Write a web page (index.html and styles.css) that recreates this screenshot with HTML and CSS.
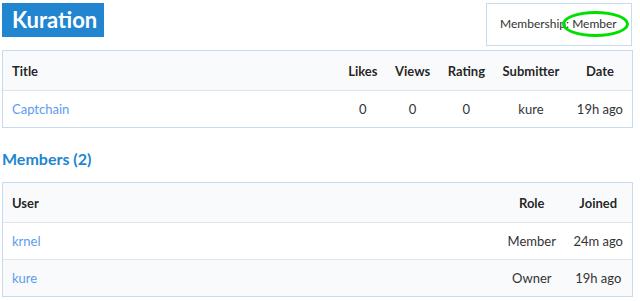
FILE: index.html
```html
<!DOCTYPE html>
<html lang="en">
<head>
    <meta charset="UTF-8">
    <title>Kuration</title>
    <link rel="stylesheet" href="styles.css">
</head>
<body>

<div class="page">

    <!-- Top bar -->
    <div class="top-bar">
        <h1 class="brand">Kuration</h1>
        <div class="membership">
            Membership: <span class="status">Member</span>
        </div>
    </div>

    <!-- Submissions -->
    <table class="list">
        <thead>
            <tr>
                <th class="left">Title</th>
                <th>Likes</th>
                <th>Views</th>
                <th>Rating</th>
                <th>Submitter</th>
                <th>Date</th>
            </tr>
        </thead>
        <tbody>
            <tr>
                <td class="left"><a href="#">Captchain</a></td>
                <td>0</td>
                <td>0</td>
                <td>0</td>
                <td>kure</td>
                <td>19h ago</td>
            </tr>
        </tbody>
    </table>

    <!-- Members -->
    <h2 class="section-title">Members (2)</h2>
    <table class="list">
        <thead>
            <tr>
                <th class="left">User</th>
                <th>Role</th>
                <th>Joined</th>
            </tr>
        </thead>
        <tbody>
            <tr>
                <td class="left"><a href="#">krnel</a></td>
                <td>Member</td>
                <td>24m ago</td>
            </tr>
            <tr class="alt">
                <td class="left"><a href="#">kure</a></td>
                <td>Owner</td>
                <td>19h ago</td>
            </tr>
        </tbody>
    </table>

</div>

</body>
</html>
```

FILE: styles.css
```css
body {
    font-family: Lato, 'Liberation Sans', sans-serif;
    margin: 0;
    padding: 0;
    background: white;
    color: rgba(0, 0, 0, 0.87);
    font-size: 13px;
}

.page {
    width: 630px;
    padding: 3px 0 0 2px;
}

.top-bar {
    display: flex;
    justify-content: space-between;
    align-items: flex-start;
}

.brand {
    margin: 0;
    background: #2185d0;
    color: white;
    font-size: 22px;
    font-weight: 700;
    line-height: 34px;
    height: 34px;
    padding: 0 10px;
    width: 82px;
}

.membership {
    border: 1px solid #c5dcf0;
    width: 146px;
    height: 43px;
    box-sizing: border-box;
    padding: 12px 0 0 13px;
    font-size: 12px;
    color: #333;
}

.status {
    position: relative;
}

.status::after {
    content: '';
    position: absolute;
    left: -10px;
    right: -12px;
    top: -5px;
    bottom: -6px;
    border: 3px solid #00e000;
    border-radius: 50%;
}

.list {
    width: 631px;
    border-collapse: separate;
    border-spacing: 0;
    border: 1px solid #c5dcf0;
    margin-top: 4px;
}

.list th {
    background: #f9fafb;
    font-weight: 700;
    height: 39px;
    padding: 0 8.75px;
    border-bottom: 1px solid #e3e4e5;
    text-align: center;
    white-space: nowrap;
}

.list td {
    height: 36px;
    padding: 0 8.75px;
    text-align: center;
    color: #333;
    white-space: nowrap;
}

.list th:last-child,
.list td:last-child {
    padding-right: 9px;
}

.list tbody tr + tr td {
    border-top: 1px solid #e3e4e5;
}

.list tr.alt td {
    background: #f9fafb;
}

.list .left {
    text-align: left;
    width: 100%;
    padding-left: 9px;
}

.list a {
    color: #5d9cec;
    text-decoration: none;
}

.section-title {
    margin: 21px 0 13px;
    color: #2185d0;
    font-size: 16px;
    line-height: 20px;
    font-weight: 700;
}
```
